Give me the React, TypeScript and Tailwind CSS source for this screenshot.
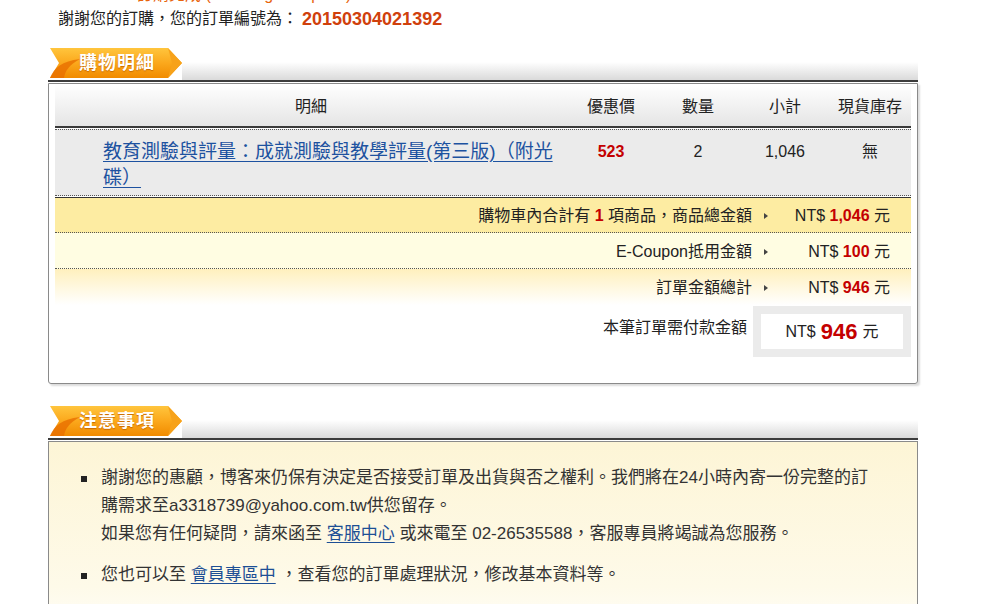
import React from 'react';

const font = "font-['Liberation_Sans','Noto_Sans_CJK_TC',sans-serif]";

function SectionTab({ title }: { title: string }) {
  return (
    <div className="flex items-end h-[32px]">
      <div className="relative w-[134px] h-[32px] shrink-0">
        <svg width="134" height="30" viewBox="0 0 134 30" className="absolute left-0 top-0">
          <defs>
            <linearGradient id={`tab-${title}`} x1="0" y1="0" x2="0" y2="1">
              <stop offset="0" stopColor="#ffc53d" />
              <stop offset="0.5" stopColor="#fba81c" />
              <stop offset="1" stopColor="#f18b00" />
            </linearGradient>
          </defs>
          <polygon points="2,0 120,0 134,15 120,30 2,30 11,15" fill={`url(#tab-${title})`} />
          <path d="M2,30 C6,20 14,13 32,11 C21,17 17,23 16,30 Z" fill="#e86f00" opacity="0.8" />
          <path d="M120,0 L134,15 L120,30 L124,15 Z" fill="#f7a21a" />
        </svg>
        <span className="absolute left-[31px] top-[3px] text-[18px] leading-[24px] font-bold text-white tracking-[1px] [text-shadow:0_1px_1px_#c86a00]">
          {title}
        </span>
      </div>
      <div className="flex-1 h-[18px] bg-gradient-to-b from-white to-[#dadada]" />
    </div>
  );
}

function Arrow() {
  return (
    <svg width="4" height="6" viewBox="0 0 4 6" className="inline-block">
      <polygon points="0,0 4,3 0,6" fill="#444" />
    </svg>
  );
}

function SummaryRow({
  label,
  amount,
  className,
}: {
  label: React.ReactNode;
  amount: string;
  className: string;
}) {
  return (
    <div className={`flex items-center justify-end pt-[2px] text-[16px] text-[#222] ${className}`}>
      <span>{label}</span>
      <span className="w-[28px] flex justify-center items-center">
        <Arrow />
      </span>
      <span className="w-[131px] text-right pr-[21px]">
        NT$ <b className="text-[#c40000]">{amount}</b> 元
      </span>
    </div>
  );
}

export default function App() {
  return (
    <div className={`${font} bg-white w-[999px] h-[604px] overflow-hidden text-[#222]`}>
      <div className="pl-[48px] w-[918px]">
        <div className="h-[5px] overflow-hidden flex items-end pl-[89px]">
          <span className="text-[16px] leading-[20px] text-[#e8640c] whitespace-nowrap">
            訂購完成 (Ordering Complete)
          </span>
        </div>
        <div className="pl-[10px] h-[28px] flex items-center text-[16px]">
          <span>謝謝您的訂購，您的訂單編號為：</span>
          <b className="ml-[4px] text-[18px] text-[#d0400c]">20150304021392</b>
        </div>

        {/* 購物明細 */}
        <div className="mt-[15px]">
          <SectionTab title="購物明細" />
          <div className="h-[2px] bg-[#3c3c3c]" />
          <div className="h-[1px]" />
          <div className="border border-[#8a8a8a] rounded-b-[3px] shadow-[2px_2px_2px_#dcdcdc] px-[6px] pb-[26px]">
            <div className="flex h-[44px] items-center pt-[4px] text-[16px] text-[#222] bg-gradient-to-b from-white to-[#e5e5e5] border-b-2 border-[#3a3a3a]">
              <div className="w-[512px] text-center">明細</div>
              <div className="w-[88px] text-center">優惠價</div>
              <div className="w-[86px] text-center">數量</div>
              <div className="w-[88px] text-center">小計</div>
              <div className="flex-1 text-center">現貨庫存</div>
            </div>
            <div className="flex items-start bg-[#ebebeb] border-t border-b border-dotted border-[#555] mt-[1px] pt-[9px] pb-[3px] min-h-[67px]">
              <div className="w-[512px] pl-[48px] pr-[2px]">
                <a className="text-[19px] leading-[26px] text-[#1d52a0] underline underline-offset-[3px]">
                  教育測驗與評量：成就測驗與教學評量(第三版)（附光碟）
                </a>
              </div>
              <div className="w-[88px] text-center text-[16px] leading-[26px] font-bold text-[#c40000]">523</div>
              <div className="w-[86px] text-center text-[16px] leading-[26px]">2</div>
              <div className="w-[88px] text-center text-[16px] leading-[26px]">1,046</div>
              <div className="flex-1 text-center text-[16px] leading-[26px]">無</div>
            </div>
            <div className="mt-[1px] h-[1px] bg-[#333]" />
            <SummaryRow
              className="bg-[#fdeca2] border-b border-dotted border-[#555] h-[35px]"
              label={
                <>
                  購物車內合計有 <b className="text-[#c40000]">1</b> 項商品，商品總金額
                </>
              }
              amount="1,046"
            />
            <SummaryRow
              className="bg-[#fffde2] border-b border-dotted border-[#555] h-[36px]"
              label="E-Coupon抵用金額"
              amount="100"
            />
            <SummaryRow
              className="bg-gradient-to-b from-[#fff0bd] to-white h-[36px]"
              label="訂單金額總計"
              amount="946"
            />
            <div className="flex justify-end items-start mt-[1px]">
              <span className="pt-[10px] pr-[6px] text-[16px]">本筆訂單需付款金額</span>
              <div className="w-[158px] bg-[#ebebeb] p-[8px]">
                <div className="h-[35px] bg-white flex items-center justify-center text-[16px]">
                  NT$ <b className="mx-[5px] text-[22px] text-[#c40000]">946</b> 元
                </div>
              </div>
            </div>
          </div>
        </div>

        {/* 注意事項 */}
        <div className="mt-[22px]">
          <SectionTab title="注意事項" />
          <div className="h-[2px] bg-[#3c3c3c]" />
          <div className="h-[1px]" />
          <div className="border border-b-0 border-[#8a8a8a] bg-gradient-to-b from-[#fdf5d6] via-[#fefae9] via-70% to-white pt-[22px] pb-[60px] pl-[32px]">
            <ul className="text-[17px] leading-[28px] text-[#333]">
              <li className="flex mb-[13px]">
                <span className="w-[6px] h-[6px] bg-[#222] mt-[12px] mr-[14px] shrink-0" />
                <div className="w-[775px]">
                  謝謝您的惠顧，博客來仍保有決定是否接受訂單及出貨與否之權利。我們將在24小時內寄一份完整的訂購需求至a3318739@yahoo.com.tw供您留存。
                  <br />
                  如果您有任何疑問，請來函至 <a className="text-[#1d4f95] underline underline-offset-[3px]">客服中心</a> 或來電至 02-26535588，客服專員將竭誠為您服務。
                </div>
              </li>
              <li className="flex">
                <span className="w-[6px] h-[6px] bg-[#222] mt-[12px] mr-[14px] shrink-0" />
                <div>
                  您也可以至 <a className="text-[#1d4f95] underline underline-offset-[3px]">會員專區中</a> ，查看您的訂單處理狀況，修改基本資料等。
                </div>
              </li>
            </ul>
          </div>
        </div>
      </div>
    </div>
  );
}
